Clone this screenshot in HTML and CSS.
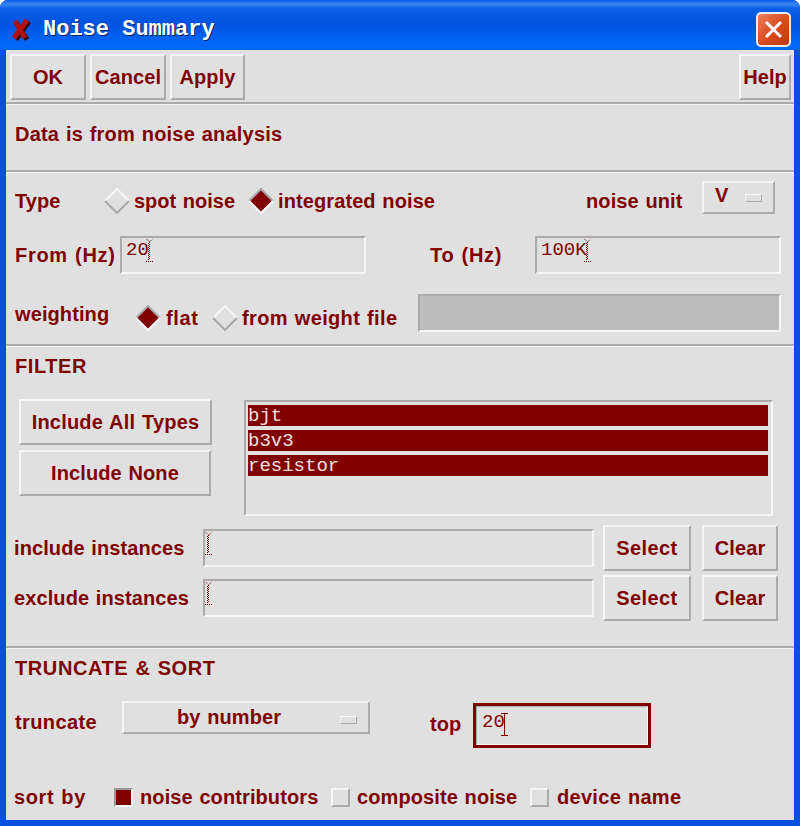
FILE: index.html
```html
<!DOCTYPE html>
<html>
<head>
    <title>Noise Summary</title>
    <link rel="stylesheet" href="styles.css">
</head>
<body>
    <div class="window">
        <div class="titlebar">
            <svg class="app-icon" width="20" height="22" viewBox="0 0 20 22">
                <path d="M4 3 L15 20 M17 2 L4 20" fill="none" stroke="#3a0808" stroke-width="5" transform="translate(1 0.5)"/>
                <path d="M4 2 L14 19 M16 1 L3 19" fill="none" stroke="#b01212" stroke-width="5"/>
            </svg>
            <span class="title-text">Noise Summary</span>
            <div class="close-btn">
                <svg width="21" height="21" viewBox="0 0 21 21">
                    <path d="M3 3 L18 18 M18 3 L3 18" stroke="#fff" stroke-width="3" fill="none"/>
                </svg>
            </div>
        </div>

        <div class="content">
            <div class="section toolbar">
                <button class="btn btn-ok">OK</button>
                <button class="btn btn-cancel">Cancel</button>
                <button class="btn btn-apply">Apply</button>
                <button class="btn btn-help">Help</button>
            </div>

            <div class="section info">
                <span>Data is from noise analysis</span>
            </div>

            <div class="section analysis">
                <div class="row row-type">
                    <span class="w-type">Type</span>
                    <svg class="diamond" width="26" height="26" viewBox="0 0 26 26">
                        <polygon points="13,1 25,13 13,25 1,13" fill="#e0e0e0"/>
                        <path d="M1 13 L13 1 L25 13" fill="none" stroke="#f6f6f6" stroke-width="2"/>
                        <path d="M1 13 L13 25 L25 13" fill="none" stroke="#a8a8a8" stroke-width="2"/>
                    </svg>
                    <span class="w-spot">spot noise</span>
                    <svg class="diamond" width="26" height="26" viewBox="0 0 26 26">
                        <polygon points="13,1 25,13 13,25 1,13" fill="#800000"/>
                        <path d="M1 13 L13 1 L25 13" fill="none" stroke="#a8a8a8" stroke-width="2"/>
                        <path d="M1 13 L13 25 L25 13" fill="none" stroke="#f6f6f6" stroke-width="2"/>
                    </svg>
                    <span class="w-integrated">integrated noise</span>
                    <span class="w-unit">noise unit</span>
                    <div class="menu menu-unit">
                        <span class="menu-label">V</span>
                        <span class="menu-mark"></span>
                    </div>
                </div>
                <div class="row row-range">
                    <span class="w-from">From (Hz)</span>
                    <div class="field field-range">
                        <span>20</span>
                        <svg class="caret" width="9" height="25" viewBox="0 0 9 25">
                            <path d="M1.5 1 L4.5 4 L7.5 1 M4.5 4 V22 M3.5 5 V22 M1 23.5 H9" fill="none" stroke="#800000" stroke-dasharray="1 1"/>
                        </svg>
                    </div>
                    <span class="w-to">To (Hz)</span>
                    <div class="field field-range">
                        <span>100K</span>
                        <svg class="caret" width="9" height="25" viewBox="0 0 9 25">
                            <path d="M1.5 1 L4.5 4 L7.5 1 M4.5 4 V22 M3.5 5 V22 M1 23.5 H9" fill="none" stroke="#800000" stroke-dasharray="1 1"/>
                        </svg>
                    </div>
                </div>
                <div class="row row-weight">
                    <span class="w-weight">weighting</span>
                    <svg class="diamond" width="26" height="26" viewBox="0 0 26 26">
                        <polygon points="13,1 25,13 13,25 1,13" fill="#800000"/>
                        <path d="M1 13 L13 1 L25 13" fill="none" stroke="#a8a8a8" stroke-width="2"/>
                        <path d="M1 13 L13 25 L25 13" fill="none" stroke="#f6f6f6" stroke-width="2"/>
                    </svg>
                    <span class="w-flat">flat</span>
                    <svg class="diamond" width="26" height="26" viewBox="0 0 26 26">
                        <polygon points="13,1 25,13 13,25 1,13" fill="#e0e0e0"/>
                        <path d="M1 13 L13 1 L25 13" fill="none" stroke="#f6f6f6" stroke-width="2"/>
                        <path d="M1 13 L13 25 L25 13" fill="none" stroke="#a8a8a8" stroke-width="2"/>
                    </svg>
                    <span class="w-file">from weight file</span>
                    <div class="field field-disabled"></div>
                </div>
            </div>

            <div class="section filter">
                <div class="heading">FILTER</div>
                <div class="filter-main">
                    <div class="filter-buttons">
                        <button class="btn btn-all">Include All Types</button>
                        <button class="btn btn-none">Include None</button>
                    </div>
                    <div class="list">
                        <div class="list-item">bjt</div>
                        <div class="list-item">b3v3</div>
                        <div class="list-item">resistor</div>
                    </div>
                </div>
                <div class="row row-instances">
                    <span class="w-instances">include instances</span>
                    <div class="field field-instances">
                        <svg class="caret" width="9" height="25" viewBox="0 0 9 25">
                            <path d="M1.5 1 L4.5 4 L7.5 1 M4.5 4 V22 M3.5 5 V22 M1 23.5 H9" fill="none" stroke="#800000" stroke-dasharray="1 1"/>
                        </svg>
                    </div>
                    <button class="btn btn-select">Select</button>
                    <button class="btn btn-clear">Clear</button>
                </div>
                <div class="row row-instances">
                    <span class="w-instances">exclude instances</span>
                    <div class="field field-instances">
                        <svg class="caret" width="9" height="25" viewBox="0 0 9 25">
                            <path d="M1.5 1 L4.5 4 L7.5 1 M4.5 4 V22 M3.5 5 V22 M1 23.5 H9" fill="none" stroke="#800000" stroke-dasharray="1 1"/>
                        </svg>
                    </div>
                    <button class="btn btn-select">Select</button>
                    <button class="btn btn-clear">Clear</button>
                </div>
            </div>

            <div class="section truncate">
                <div class="heading">TRUNCATE &amp; SORT</div>
                <div class="row row-truncate">
                    <span class="w-truncate">truncate</span>
                    <div class="menu menu-truncate">
                        <span class="menu-label">by number</span>
                        <span class="menu-mark"></span>
                    </div>
                    <span class="w-top">top</span>
                    <div class="focus-ring">
                        <div class="field field-top">
                            <span>20</span>
                            <svg class="caret" width="9" height="25" viewBox="0 0 9 25">
                                <path d="M1 1.5 H8 M4.5 1 V24 M1 23.5 H8" fill="none" stroke="#800000"/>
                            </svg>
                        </div>
                    </div>
                </div>
                <div class="row row-sort">
                    <span class="w-sort">sort by</span>
                    <span class="check check-on"></span>
                    <span class="w-contrib">noise contributors</span>
                    <span class="check"></span>
                    <span class="w-composite">composite noise</span>
                    <span class="check"></span>
                    <span class="w-device">device name</span>
                </div>
            </div>
        </div>
    </div>
</body>
</html>
```

FILE: styles.css
```css
body {
    margin: 0;
    background-color: #fff;
    font-family: "Liberation Sans", Arial, sans-serif;
    font-size: 20px;
    font-weight: bold;
    letter-spacing: 0.1px;
    word-spacing: 1px;
    white-space: nowrap;
    color: #800000;
}

.window {
    width: 800px;
    height: 826px;
    background-color: #0a50e0;
    border-radius: 8px 8px 0 0;
    overflow: hidden;
}

/* title bar */
.titlebar {
    height: 50px;
    box-sizing: border-box;
    padding: 9px 9px 0 11px;
    display: flex;
    align-items: center;
    background: linear-gradient(#0a5ae8 0, #3a86f4 4px, #0a5ee6 9px, #0052e0 24px, #0066f6 42px, #0068f8 50px);
}

.app-icon {
    flex: none;
}

.title-text {
    margin-left: 12px;
    font-family: "Liberation Mono", monospace;
    font-size: 22px;
    letter-spacing: 0;
    word-spacing: 0;
    color: #fff;
    text-shadow: 1px 1px 0 #102060;
}

.close-btn {
    margin-left: auto;
    width: 31px;
    height: 31px;
    border: 2px solid #e6ecf8;
    border-radius: 5px;
    display: flex;
    align-items: center;
    justify-content: center;
    background: linear-gradient(135deg, #e88060, #d8481c 55%, #c03a10);
}

/* dialog body */
.content {
    margin: 0 6px;
    height: 770px;
    background-color: #e0e0e0;
}

.section {
    box-sizing: border-box;
    border-bottom: 2px solid #aaa;
    box-shadow: inset 0 1px 0 #f2f2f2;
}

.section:last-child {
    border-bottom: none;
}

.toolbar {
    height: 54px;
    padding: 4px 3px 0 4px;
    display: flex;
    box-shadow: none;
}

.info {
    height: 68px;
    padding: 19px 0 0 9px;
    letter-spacing: 0.2px;
}

.analysis {
    height: 174px;
    padding: 9px 13px 0 9px;
}

.filter {
    height: 302px;
    padding: 9px 16px 0 8px;
}

.truncate {
    height: 172px;
    padding: 9px 0 0 8px;
}

.row {
    display: flex;
    align-items: center;
}

.heading {
    line-height: 23px;
    margin-left: 1px;
    letter-spacing: 0.6px;
}

/* buttons */
.btn {
    box-sizing: border-box;
    flex: none;
    height: 46px;
    margin: 0;
    padding: 0;
    background-color: #e0e0e0;
    border: 2px solid;
    border-color: #f6f6f6 #aaa #aaa #f6f6f6;
    color: #800000;
    font: inherit;
    letter-spacing: inherit;
    word-spacing: inherit;
}

.btn-ok,
.btn-cancel {
    width: 76px;
    margin-right: 4px;
}

.btn-apply {
    width: 75px;
}

.btn-help {
    width: 52px;
    margin-left: auto;
}

.btn-all {
    width: 193px;
    letter-spacing: 0.2px;
}

.btn-none {
    width: 192px;
    margin-top: 5px;
}

.btn-select {
    width: 88px;
    margin-left: 9px;
    letter-spacing: 0.4px;
}

.btn-clear {
    width: 76px;
    margin-left: 11px;
}

/* text fields */
.field {
    box-sizing: border-box;
    flex: none;
    border: 2px solid;
    border-color: #aaa #f6f6f6 #f6f6f6 #aaa;
    display: flex;
    align-items: flex-start;
    font-family: "Liberation Mono", monospace;
    font-size: 19px;
    font-weight: normal;
    letter-spacing: 0;
    word-spacing: 0;
}

.caret {
    flex: none;
    margin-left: -4px;
    margin-top: -1px;
}

.field-range {
    width: 246px;
    height: 38px;
    padding: 1px 0 0 4px;
}

.field-disabled {
    width: 363px;
    height: 38px;
    margin-left: 21px;
    background-color: #bcbcbc;
}

.field-instances {
    width: 391px;
    height: 38px;
    padding: 1px 0 0 3px;
}

.focus-ring {
    flex: none;
    align-self: flex-end;
    margin-left: 13px;
    border: 3px solid #800000;
}

.field-top {
    width: 172px;
    height: 39px;
    padding: 4px 0 0 5px;
    border-width: 1px;
}

.field-top .caret {
    margin-left: -5px;
    margin-top: 1px;
}

/* option menus */
.menu {
    box-sizing: border-box;
    flex: none;
    height: 33px;
    border: 2px solid;
    border-color: #f6f6f6 #aaa #aaa #f6f6f6;
    display: flex;
    align-items: center;
    padding: 0 11px 4px 0;
}

.menu-mark {
    box-sizing: border-box;
    width: 17px;
    height: 8px;
    margin-top: 4px;
    margin-left: auto;
    border: 1px solid;
    border-color: #f6f6f6 #aaa #aaa #f6f6f6;
}

.menu-unit {
    width: 73px;
    margin-left: 21px;
    margin-top: -7px;
}

.menu-unit .menu-label {
    margin-left: 11px;
}

.menu-truncate {
    width: 248px;
    margin-left: 24px;
    align-self: flex-start;
    padding-bottom: 0;
}

.menu-truncate .menu-label {
    margin-left: 53px;
}

/* radios and checks */
.diamond {
    flex: none;
}

.check {
    box-sizing: border-box;
    flex: none;
    width: 19px;
    height: 19px;
    border: 2px solid;
    border-color: #f6f6f6 #aaa #aaa #f6f6f6;
}

.check-on {
    background-color: #800000;
    border-color: #999 #f6f6f6 #f6f6f6 #999;
}

/* form rows */
.row-type {
    height: 40px;
}

.w-type {
    width: 89px;
}

.w-spot {
    margin-left: 4px;
    width: 114px;
    letter-spacing: 0;
}

.w-integrated {
    margin-left: 4px;
    width: 308px;
}

.w-unit {
    width: 95px;
}

.row-range {
    height: 38px;
    margin-top: 15px;
}

.w-from {
    width: 105px;
    letter-spacing: 0.7px;
}

.w-to {
    width: 105px;
    margin-left: 64px;
    letter-spacing: 0.7px;
}

.row-weight {
    height: 38px;
    margin-top: 20px;
}

.row-weight .diamond {
    margin-top: 10px;
}

.w-weight {
    width: 120px;
    margin-top: 2px;
}

.w-flat {
    margin-left: 5px;
    margin-top: 10px;
    width: 46px;
    letter-spacing: 0.6px;
}

.w-file {
    margin-left: 4px;
    margin-top: 10px;
    width: 155px;
    letter-spacing: 0.35px;
}

.filter-main {
    display: flex;
    margin-top: 21px;
}

.filter-buttons {
    width: 225px;
    margin-left: 5px;
    display: flex;
    flex-direction: column;
}

.list {
    box-sizing: border-box;
    width: 529px;
    height: 116px;
    margin-top: 1px;
    padding: 3px 3px 0 2px;
    border: 2px solid;
    border-color: #aaa #f6f6f6 #f6f6f6 #aaa;
    font-family: "Liberation Mono", monospace;
    font-size: 19px;
    font-weight: normal;
    letter-spacing: 0;
    word-spacing: 0;
}

.list-item {
    height: 21px;
    margin-bottom: 4px;
    background-color: #800000;
    color: #f0e0e0;
    line-height: 23px;
}

.row-instances {
    height: 46px;
    margin-top: 9px;
}

.row-instances + .row-instances {
    margin-top: 4px;
}

.w-instances {
    width: 189px;
}

.row-truncate {
    margin-top: 21px;
    height: 47px;
}

.w-truncate {
    width: 83px;
    margin-left: 1px;
    margin-top: -4px;
    letter-spacing: 0.4px;
}

.w-top {
    margin-left: 60px;
    width: 30px;
}

.row-sort {
    margin-top: 36px;
    height: 26px;
}

.w-sort {
    width: 100px;
    letter-spacing: 0.6px;
}

.w-contrib {
    margin-left: 7px;
    width: 191px;
}

.w-composite {
    margin-left: 7px;
    width: 173px;
}

.w-device {
    margin-left: 8px;
    letter-spacing: 0.3px;
}
```
